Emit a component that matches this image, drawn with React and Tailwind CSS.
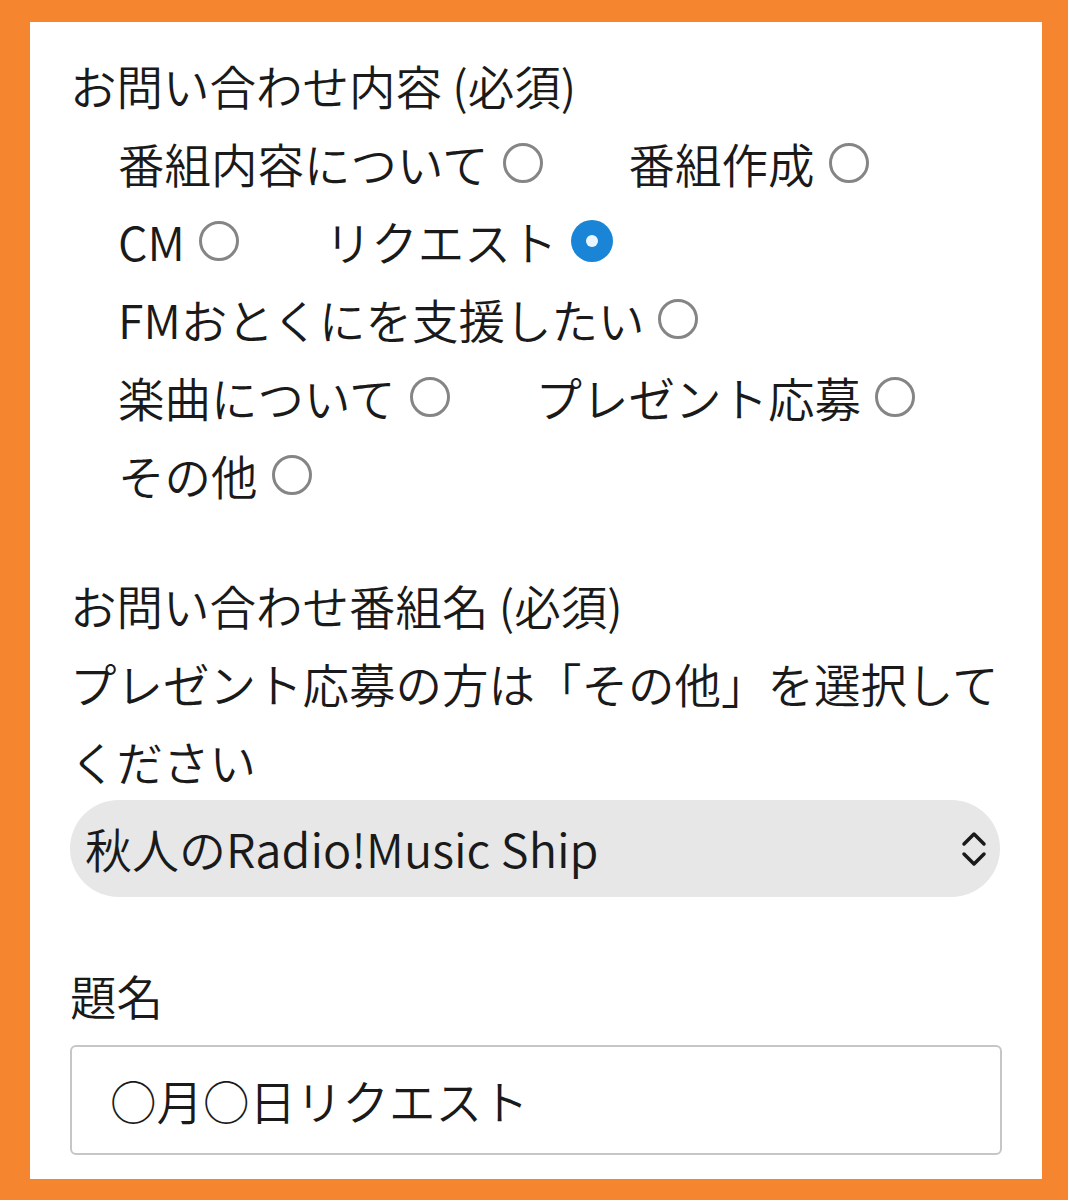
import React from "react";

const FONT = { fontFamily: '"Noto Sans CJK JP", "Noto Sans", sans-serif' };

function Radio({ checked }) {
  if (checked) {
    return (
      <span className="flex h-[42px] w-[42px] shrink-0 items-center justify-center rounded-full bg-[#1a85d6]">
        <span className="h-[12px] w-[12px] rounded-full bg-[#eaf6ff]" />
      </span>
    );
  }
  return <span className="h-[40px] w-[40px] shrink-0 rounded-full border-[3px] border-[#858585] bg-white" />;
}

function Option({ label, checked }) {
  return (
    <label className="flex h-[78px] items-center gap-[14px] whitespace-nowrap">
      <span>{label}</span>
      <Radio checked={checked} />
    </label>
  );
}

export default function App() {
  const options = [
    ["番組内容について", false],
    ["番組作成", false],
    ["CM", false],
    ["リクエスト", true],
    ["FMおとくにを支援したい", false],
    ["楽曲について", false],
    ["プレゼント応募", false],
    ["その他", false],
  ];
  return (
    <div className="min-h-[1200px] bg-[#f6852f] pt-[22px] pl-[30px] pr-[26px] pb-[21px]">
      <div
        className="bg-white pl-[40px] pr-[38px] pt-[24px] pb-[24px] text-[46.5px] font-[350] text-[#1a1a1a]"
        style={FONT}
      >
        <div className="leading-[78px]">お問い合わせ内容 (必須)</div>
        <div className="flex flex-wrap gap-x-[86px] pl-[48px]">
          {options.map(([l, c]) => (
            <Option key={l} label={l} checked={c} />
          ))}
        </div>

        <div className="mt-[52px] leading-[78px]">お問い合わせ番組名 (必須)</div>
        <div className="leading-[78px]">プレゼント応募の方は「その他」を選択してください</div>

        <div className="mr-[4px] flex h-[97px] items-center justify-between rounded-full bg-[#e7e7e7] pl-[15px] pr-[12px]">
          <span className="text-[47px]">秋人のRadio!Music Ship</span>
          <svg width="28" height="40" viewBox="0 0 28 40" fill="none" stroke="#1a1a1a" strokeWidth="3.5" strokeLinecap="round" strokeLinejoin="round">
            <path d="M4 15 L14 5 L24 15" />
            <path d="M4 25 L14 35 L24 25" />
          </svg>
        </div>

        <div className="mt-[59px] leading-[78px]">題名</div>
        <div className="mr-[2px] mt-[11px] flex h-[110px] items-center rounded-[6px] border-2 border-[#c6c6c6] pl-[38px]">
          ○月○日リクエスト
        </div>
      </div>
    </div>
  );
}
